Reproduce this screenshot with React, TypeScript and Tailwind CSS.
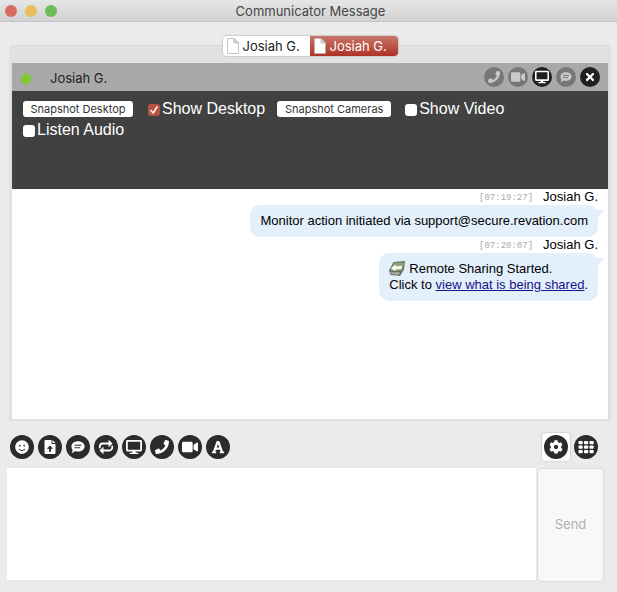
import React from 'react';
import { FaCog, FaDesktop, FaFont, FaPhone, FaSmile, FaTimes, FaVideo } from 'react-icons/fa';

function ChatIcon({ className, hole }: { className: string; hole: string }) {
  return (
    <svg className={className} viewBox="0 0 16 16" fill="currentColor">
      <path d="M8 1.500c4.200 0 7.500 2.600 7.500 5.800S12.200 13.200 8 13.200c-1.200 0-2.300-.2-3.300-.6C3.600 13.800 2 14.600.6 14.800c.8-1 1.300-2.200 1.300-3.400C1 10.300.5 8.900.5 7.300.5 4.100 3.800 1.500 8 1.500z" />
      <path d="M4.500 6h7M4.500 8.800h5.500" stroke={hole} strokeWidth="1.300" strokeLinecap="round" />
    </svg>
  );
}

function UploadIcon() {
  return (
    <svg className="h-4 w-4" viewBox="0 0 16 16" fill="currentColor">
      <path d="M3.500 1h6v4h4v9a1 1 0 0 1-1 1h-9a1 1 0 0 1-1-1V2a1 1 0 0 1 1-1zM10.500 1l3 3h-3z" />
      <path d="M8 6.500L11.200 9.800H9v3H7v-3H4.800z" fill="#2b2b2b" />
    </svg>
  );
}

function TransferIcon() {
  return (
    <svg className="h-4 w-4" viewBox="0 0 16 16" fill="none" stroke="currentColor" strokeWidth="1.800" strokeLinecap="round" strokeLinejoin="round">
      <path d="M1.800 8.500V7.500a3 3 0 0 1 3-3h7M14.200 7.500v1a3 3 0 0 1-3 3h-7" />
      <path d="M11 1.500l3.200 3L11 7.500zM5 8.500l-3.200 3 3.200 3z" fill="currentColor" strokeWidth="0.600" />
    </svg>
  );
}

function KeypadIcon() {
  return (
    <svg className="h-4 w-4" viewBox="0 0 16 16" fill="currentColor">
      {[2, 6.500, 11].map((y) =>
        [0.5, 6, 11.500].map((x) => <rect key={`${x}-${y}`} x={x} y={y} width="4.200" height="3.300" rx="0.800" />)
      )}
    </svg>
  );
}

function PageIcon() {
  return (
    <svg className="h-4 w-3 shrink-0" viewBox="0 0 12 16" stroke="#b5b5b5" strokeWidth="0.800" strokeLinejoin="round">
      <path d="M.5.5h6.500l4.500 4.500v10.500H.5z" fill="#fff" />
      <path d="M7 .5V5h4.500z" fill="#d8d8d8" />
    </svg>
  );
}

function SharingIcon() {
  return (
    <svg className="mr-1 h-4 w-4 shrink-0" viewBox="0 0 16 16">
      <path d="M4.500 1L16 0l-1 8.500-4 6.500-9.500-1L0 9.500z" fill="#66725f" />
      <path d="M5 2l10-.8-1.800 8L1.500 10z" fill="#8da27a" />
      <path d="M1 11.500l10-.5-1.500 3L2 13z" fill="#a9aaa3" />
      <path d="M1.800 7.200L6.500 3.500v1.700l6.700-.4-.9 3.400-6 .3v1.700z" fill="#f3f8eb" />
    </svg>
  );
}

const tools = [
  { label: 'Emoticons', icon: <FaSmile className="h-3.5 w-3.5" /> },
  { label: 'Send file', icon: <UploadIcon /> },
  { label: 'Canned responses', icon: <ChatIcon className="h-3.5 w-3.5" hole="#2b2b2b" /> },
  { label: 'Transfer', icon: <TransferIcon /> },
  { label: 'Share desktop', icon: <FaDesktop className="h-4 w-4" /> },
  { label: 'Call', icon: <FaPhone className="h-3.5 w-3.5" /> },
  { label: 'Video', icon: <FaVideo className="h-4 w-4" /> },
  { label: 'Font', icon: <FaFont className="h-3.5 w-3.5" /> }
];

const sessionActions = [
  { label: 'Call', active: false, icon: <FaPhone className="h-3 w-3" /> },
  { label: 'Video', active: false, icon: <FaVideo className="h-3.5 w-3.5" /> },
  { label: 'Desktop', active: true, icon: <FaDesktop className="h-3.5 w-3.5" /> },
  { label: 'Chat', active: false, icon: <ChatIcon className="h-3 w-3" hole="#777777" /> },
  { label: 'Close', active: true, icon: <FaTimes className="h-3 w-3" /> }
];

function Option({ label, checked = false }: { label: string; checked?: boolean }) {
  return (
    <label className="flex items-center gap-0.5 text-base leading-5 text-white">
      <span className="relative mt-0.5 flex h-3 w-3">
        <input
          type="checkbox"
          defaultChecked={checked}
          className="peer h-3 w-3 appearance-none rounded-[3px] bg-white checked:bg-[#b95345]"
        />
        <svg className="pointer-events-none absolute inset-0 hidden peer-checked:block" viewBox="0 0 12 12" fill="none" stroke="#fff" strokeWidth="1.500">
          <path d="M3 6.500l2.200 2.500L9 3" strokeLinecap="round" strokeLinejoin="round" />
        </svg>
      </span>
      {label}
    </label>
  );
}

function Message({ time, children }: { time: string; children: React.ReactNode }) {
  return (
    <div className="flex flex-col items-end">
      <div className="flex h-4 items-center gap-2.5 leading-4">
        <time className="mt-0.5 font-['Liberation_Mono',monospace] text-[9px] text-[#aaaaaa]">[{time}]</time>
        <span>Josiah G.</span>
      </div>
      <div className="relative rounded-[10px] bg-[#e3effa] px-2.5 py-2 leading-4">
        {children}
        <svg className="absolute top-1 -right-2 h-3 w-3" viewBox="0 0 12 12" fill="#e3effa">
          <path d="M0 1h11.500C9 3 6 5 4 10H0z" />
        </svg>
      </div>
    </div>
  );
}

export default function App() {
  return (
    <div className="flex min-h-screen flex-col bg-[#ebebeb] font-['Inter',sans-serif] text-[13px] text-[#222222]">
      <header className="relative flex h-[22px] items-center justify-center border-b border-[#c4c4c4] bg-linear-to-b from-[#e6e6e6] to-[#d2d2d2]">
        <div className="absolute left-[5px] flex gap-2">
          <button aria-label="Close window" className="h-3 w-3 rounded-full bg-[#d96c62]" />
          <button aria-label="Minimize window" className="h-3 w-3 rounded-full bg-[#e9bd5e]" />
          <button aria-label="Zoom window" className="h-3 w-3 rounded-full bg-[#6dbb59]" />
        </div>
        <h1 className="pl-1 leading-5 text-[#474747]">Communicator Message</h1>
      </header>

      <main className="mr-1.5 ml-[9px] mt-[23px] flex flex-1 flex-col rounded-t border-x-[3px] border-t border-b-2 border-[#e0e0e0] border-t-[#dadada] bg-[#e2e2e2]">
        <nav className="relative z-10 -mt-2.5 mb-[7px] flex justify-center">
          <div className="flex h-5 overflow-hidden rounded shadow-[0_0_1px_1px_#cccccc]">
            <button className="flex w-[87px] items-center gap-1 bg-white pl-1 leading-5">
              <PageIcon />
              Josiah G.
            </button>
            <button className="flex w-[88px] items-center gap-1 bg-linear-to-b from-[#c8756b] to-[#ad3023] pl-1 leading-5 text-white">
              <PageIcon />
              Josiah G.
            </button>
          </div>
        </nav>

        <div className="flex h-7 items-center justify-between bg-[#a9a9a9] px-2">
          <div className="flex items-center gap-[18px] pt-1">
            <span className="h-3 w-3 rounded-full border border-[#9cb773] bg-[#83c738]" />
            Josiah G.
          </div>
          <div className="flex gap-1">
            {sessionActions.map((action) => (
              <button
                key={action.label}
                aria-label={action.label}
                className={`flex h-5 w-5 items-center justify-center rounded-full ${action.active ? 'bg-[#202020] text-white' : 'bg-[#777777] text-[#c9c9c9]'}`}
              >
                {action.icon}
              </button>
            ))}
          </div>
        </div>

        <section className="h-[98px] bg-[#414141] px-[11px] pt-2 font-['Liberation_Sans',Arial,sans-serif]">
          <div className="flex flex-wrap items-center gap-y-px">
            <button className="mr-[15px] h-4 w-[110px] rounded-[3px] bg-white font-['Inter',sans-serif] text-[11px] leading-4 text-[#333333]">
              Snapshot Desktop
            </button>
            <Option label="Show Desktop" checked />
            <button className="mr-3.5 ml-3 h-4 w-[114px] rounded-[3px] bg-white font-['Inter',sans-serif] text-[11px] leading-4 text-[#333333]">
              Snapshot Cameras
            </button>
            <Option label="Show Video" />
            <div className="w-full">
              <Option label="Listen Audio" />
            </div>
          </div>
        </section>

        <section className="flex-1 bg-white pr-2.5 font-['Liberation_Sans',Arial,sans-serif] text-black">
          <Message time="07:19:27">Monitor action initiated via support@secure.revation.com</Message>
          <Message time="07:20:07">
            <div className="flex items-center">
              <SharingIcon />
              Remote Sharing Started.
            </div>
            <p>
              Click to <a href="#shared" className="text-[#14148c] underline">view what is being shared</a>.
            </p>
          </Message>
        </section>
      </main>

      <div className="flex items-center justify-between pt-3 pr-[19px] pb-[7px] pl-2.5">
        <div className="flex gap-1">
          {tools.map((tool) => (
            <button
              key={tool.label}
              aria-label={tool.label}
              className="flex h-6 w-6 items-center justify-center rounded-full bg-[#2b2b2b] text-white"
            >
              {tool.icon}
            </button>
          ))}
        </div>
        <div className="flex items-center gap-1">
          <button aria-label="Settings" className="flex h-7 w-7 items-center justify-center rounded bg-white shadow-[0_0_1px_1px_#d4d4d4]">
            <span className="flex h-6 w-6 items-center justify-center rounded-full bg-[#2b2b2b] text-white">
              <FaCog className="h-3.5 w-3.5" />
            </span>
          </button>
          <button aria-label="Keypad" className="flex h-6 w-6 items-center justify-center rounded-full bg-[#2b2b2b] text-white">
            <KeypadIcon />
          </button>
        </div>
      </div>

      <form className="mb-3 flex h-28 gap-0.5 pr-3.5 pl-[7px]">
        <textarea aria-label="Message" className="h-full min-w-0 flex-1 resize-none bg-white p-1 outline-none" />
        <button type="button" className="mt-px h-28 w-[65px] rounded bg-[#f8f8f8] text-[#b0b0b0] shadow-[0_0_1px_1px_#dadada]">
          Send
        </button>
      </form>
    </div>
  );
}
